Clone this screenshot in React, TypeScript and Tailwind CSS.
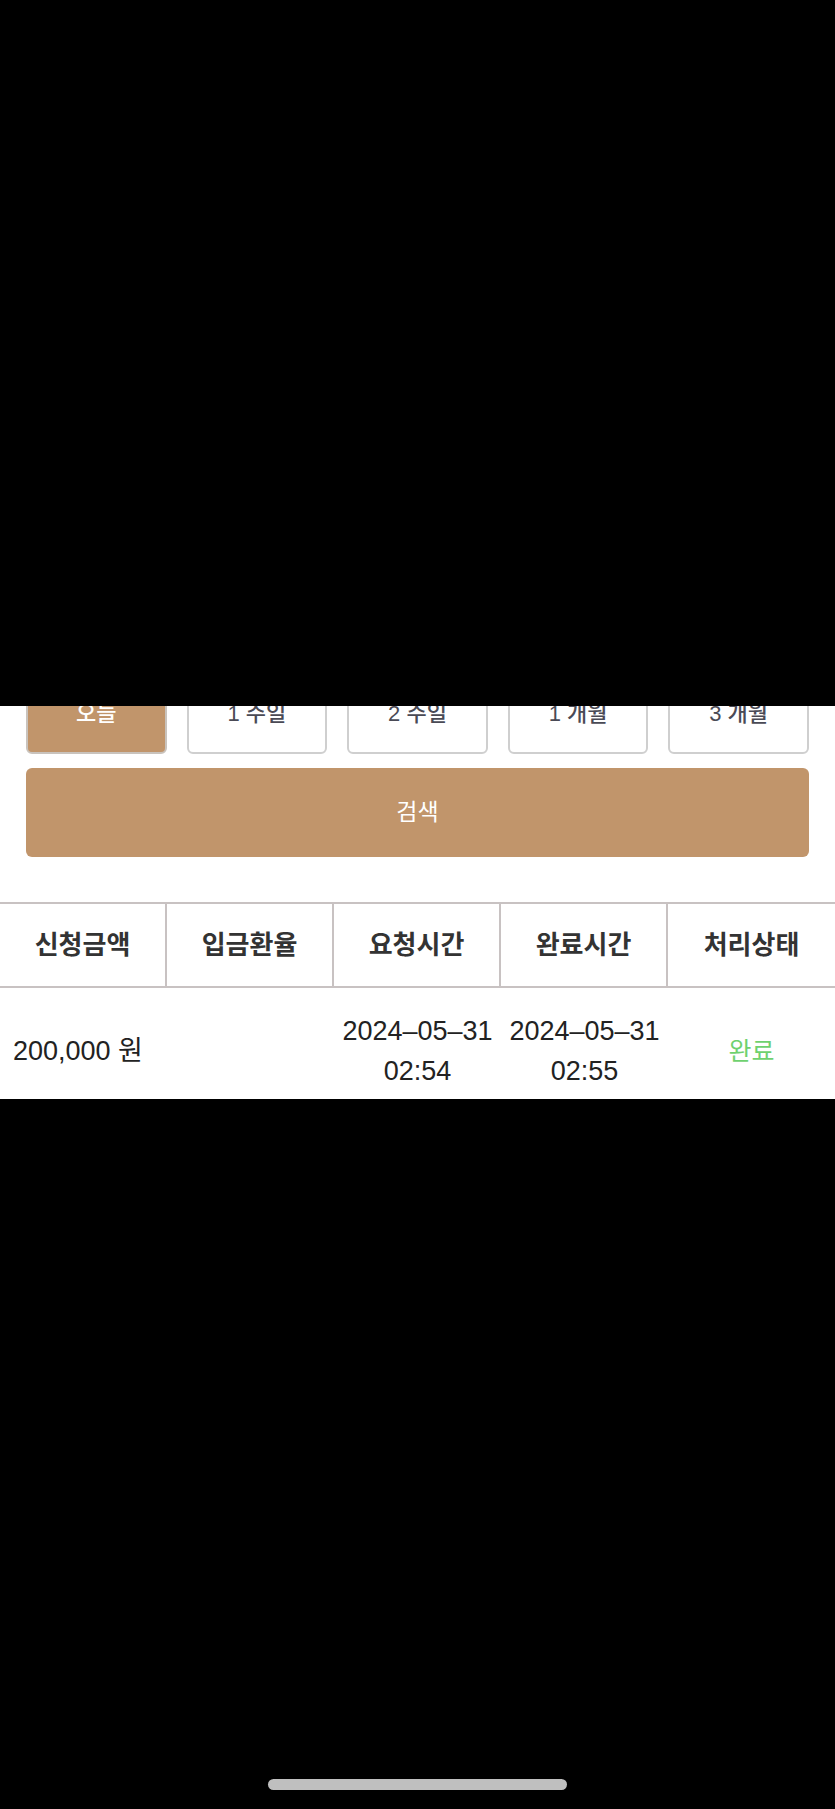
import React from "react";

const font = { fontFamily: '"Liberation Sans", "Noto Sans CJK KR", "Noto Sans", sans-serif' };

export default function App() {
  const periods = ["오늘", "1 주일", "2 주일", "1 개월", "3 개월"];
  return (
    <div className="w-[835px] h-[1809px] bg-black flex flex-col" style={font}>
      <div className="h-[706px] bg-black shrink-0" />
      <div className="bg-white shrink-0">
        <div className="h-[48px] overflow-hidden px-[26px] flex items-end gap-[20px]">
          {periods.map((p, i) => (
            <div
              key={p}
              className={
                i === 0
                  ? "flex-1 h-[82px] shrink-0 rounded-[6px] border-2 border-[#c9c3bd] bg-[#c1956b] text-white text-[22px] font-medium flex items-center justify-center"
                  : "flex-1 h-[82px] shrink-0 rounded-[6px] border-2 border-[#cfcfcf] bg-white text-[#4a4a55] text-[22px] font-medium flex items-center justify-center"
              }
            >
              {p}
            </div>
          ))}
        </div>
        <div className="mt-[14px] mx-[26px] h-[89px] rounded-[6px] bg-[#c1956b] text-white text-[23px] flex items-center justify-center">
          검색
        </div>
        <div className="h-[45px]" />
        <div className="border-t-2 border-b-2 border-[#c8c2c2] grid grid-cols-5 h-[86px]">
          {["신청금액", "입금환율", "요청시간", "완료시간", "처리상태"].map((h, i) => (
            <div
              key={h}
              className={
                i < 4
                  ? "border-r-2 border-[#c8c2c2] flex items-center justify-center text-[26px] font-bold text-[#333333]"
                  : "flex items-center justify-center text-[26px] font-bold text-[#333333]"
              }
            >
              {h}
            </div>
          ))}
        </div>
        <div className="grid grid-cols-5 h-[111px] pt-[14px] text-[27px] text-[#222222] leading-[40px]">
          <div className="flex items-center pl-[13px] whitespace-nowrap">200,000 원</div>
          <div />
          <div className="flex flex-col items-center justify-center">
            <span>2024–05–31</span>
            <span>02:54</span>
          </div>
          <div className="flex flex-col items-center justify-center">
            <span>2024–05–31</span>
            <span>02:55</span>
          </div>
          <div className="flex items-center justify-center text-[#6fd16f] text-[25px]">완료</div>
        </div>
      </div>
      <div className="flex-1 bg-black flex flex-col items-center">
        <div className="h-[680px]" />
        <div className="w-[299px] h-[11px] rounded-full bg-[#bfbfbf]" />
      </div>
    </div>
  );
}
